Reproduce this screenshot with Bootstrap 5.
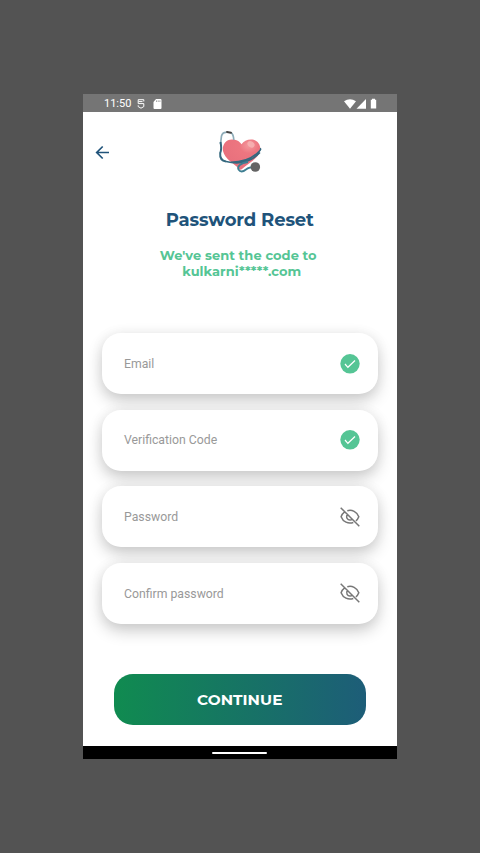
<!DOCTYPE html>
<html lang="en">
<head>
<meta charset="utf-8">
<meta name="viewport" content="width=device-width, initial-scale=1">
<title>Password Reset</title>
<link href="https://cdn.jsdelivr.net/npm/bootstrap@5.3.0/dist/css/bootstrap.min.css" rel="stylesheet">
<style>
body{background:#535353;height:853px;padding-top:94px;overflow:hidden}
svg{display:block;flex:none}
.phone{width:314.5px;height:664.5px;margin-left:82.5px;font-family:Roboto,sans-serif}
.status-strip{height:18px;background:#757575;padding:1px 20px 0 21.5px;font-size:11px;line-height:17px}
.shell-icon{margin-left:6px}
.battery{margin-left:3.500px}
.screen-head{height:98px;padding:0 13px}
.back-arrow{top:33px;margin-left:12.500px}
.logo{margin-top:16px}
.brand-font{font-family:Montserrat,Inter,"Open Sans",sans-serif;font-weight:700}
.screen-title{font-size:18px;line-height:22px;color:#20537a;margin:-1px 0 0;letter-spacing:-.13px}
.sent-note{font-size:13px;line-height:16px;color:#55c595;margin:16px 0 0;letter-spacing:.05px}
.first-line{padding-right:3px}
.second-line{padding-left:4px}
.fields{gap:15.600px;margin:54px 19px 0}
.field-box{height:61px;border-radius:19px;background:#fff;padding:0 18px 0 22.500px;font-size:12.250px;color:#999;box-shadow:0 7px 16px rgba(0,0,0,.2),0 0 14px rgba(0,0,0,.05)}
.field-box span{padding-top:1px}
.go{width:252.500px;height:51px;border-radius:19px;margin:50px auto 0;padding:2px 0 0;color:#fff;font-size:15.300px;letter-spacing:.05px;border:0;background:linear-gradient(90deg,#108b50,#1d5d78)}
.home-strip{height:12.500px;background:#000;padding-top:2px}
.home-line{width:55px;height:2px;border-radius:2px;background:#fff}
</style>
<script src="https://cdn.jsdelivr.net/npm/bootstrap@5.3.0/dist/js/bootstrap.bundle.min.js"></script>
</head>
<body>
<main class="phone bg-white d-flex flex-column">
  <div class="status-strip d-flex align-items-center text-white">
    <span>11:50</span>
    <svg class="shell-icon" width="8" height="10" viewBox="0 0 8 10" fill="none" stroke="#fff" stroke-width="1"><path d="M6.800 2.500V.7H1.200v3.900h5.600v3L4 9.200 1.200 7.600V6.300M1.500 2.600h4"/></svg>
    <svg class="ms-2" width="9" height="10" viewBox="0 0 9 10"><path d="M3 0h4.500q1 0 1 1v8q0 1-1 1h-6q-1 0-1-1V3z" fill="#fff"/><path d="M3.500 1.500v1.300M5.200 1.500v1.300M6.900 1.500v1.300" stroke="#757575" stroke-width=".8"/></svg>
    <svg class="ms-auto" width="12" height="10" viewBox="0 0 12 10"><path d="M0 2.300Q6-2 12 2.300L6 9.800z" fill="#fff"/></svg>
    <svg width="11" height="10" viewBox="0 0 11 10"><path d="M.5 9.700 10 0v9.700z" fill="#fff"/></svg>
    <svg class="battery" width="7" height="11" viewBox="0 0 7 11"><path d="M2 .7h3v1h1.200v8.800H.8V1.700H2z" fill="#fff"/></svg>
  </div>
  <div class="screen-head position-relative d-flex justify-content-center">
    <svg class="back-arrow position-absolute start-0" width="15" height="15" viewBox="0 0 15 15" fill="none" stroke="#20537a" stroke-width="1.700"><path d="M14 7.500H2M7.700 1.500l-6 6 6 6"/></svg>
    <svg class="logo" width="46" height="48" viewBox="217 128 46 48" fill="none">
      <defs><radialGradient id="heart" cx=".7" cy=".2" r=".85"><stop stop-color="#f49a9e"/><stop offset=".3" stop-color="#ed7680"/><stop offset="1" stop-color="#e76f7c"/></radialGradient></defs>
      <path d="M241.500 144.300C239 140.500 235.500 139.500 232 139.500C225 139.500 222 146 223 151C224.500 159 235 164 239 169Q240.500 170.500 242 169C248 163 258 159 260 151C261.500 144.500 257 139.500 251 139.500C247 139.500 243.500 141 241.500 144.300Z" fill="url(#heart)"/>
      <ellipse cx="251" cy="144.300" rx="3.800" ry="2.900" transform="rotate(35 251 144.300)" fill="#f7b4b4" opacity=".85"/>
      <path d="M231 132.700Q233.500 134 233.800 140M226.500 132.300Q222.500 132 221.500 136L220.500 144" stroke="#8eacb8" stroke-width="1.700"/>
      <path d="M220.500 142Q222 149 220.200 153Q219.500 160.500 226 161.500" stroke="#35687e" stroke-width="2"/>
      <path d="M227 131.900l4 .8" stroke="#444" stroke-width="2" stroke-linecap="round"/>
      <path d="M231 162.300C244 162 254 157 259.500 151Q261.500 149 260 148.500M226 161.500C240 165 252 161 260 152.500" stroke="#34687f" stroke-width="1.500"/>
      <path d="M248 162C240 163 237 167 238.500 169.500Q241 173.500 246 169.500Q249 167 255 167" stroke="#3f7f92" stroke-width="1.800"/>
      <circle cx="255.300" cy="167" r="4.800" fill="#646464"/>
    </svg>
  </div>
  <h1 class="brand-font screen-title text-center">Password Reset</h1>
  <p class="brand-font sent-note text-center"><span class="first-line">We've sent the code to</span><br><span class="second-line">kulkarni*****.com</span></p>
  <div class="fields d-flex flex-column">
    <div class="field-box d-flex align-items-center justify-content-between"><span>Email</span><svg width="20" height="20" viewBox="0 0 20 20"><circle cx="10" cy="9.800" r="9.700" fill="#55c595"/><path d="M5 10l2.900 3.300L15 6.500" fill="none" stroke="#fff" stroke-width="1.200"/></svg></div>
    <div class="field-box d-flex align-items-center justify-content-between"><span>Verification Code</span><svg width="20" height="20" viewBox="0 0 20 20"><circle cx="10" cy="9.800" r="9.700" fill="#55c595"/><path d="M5 10l2.900 3.300L15 6.500" fill="none" stroke="#fff" stroke-width="1.200"/></svg></div>
    <div class="field-box d-flex align-items-center justify-content-between"><span>Password</span><svg width="20" height="20" viewBox="0 0 20 20" fill="none" stroke="#777" stroke-width="1.500"><path d="M.7.700l18.600 18.600M7.300 3.800C12 2.300 17 5 18.800 9.700c-.7 1.800-1.600 3.100-2.900 4.100M4.400 5.200C2.900 6.300 1.800 7.800 1.100 9.700c2 5.200 7 7.500 12.200 5.800M7.400 7.500c-1.800 2.700.1 5.600 2.700 5.500 1 0 1.700-.3 2.300-.8"/></svg></div>
    <div class="field-box d-flex align-items-center justify-content-between"><span>Confirm password</span><svg width="20" height="20" viewBox="0 0 20 20" fill="none" stroke="#777" stroke-width="1.500"><path d="M.7.700l18.600 18.600M7.300 3.800C12 2.300 17 5 18.800 9.700c-.7 1.800-1.600 3.100-2.900 4.100M4.400 5.200C2.900 6.300 1.800 7.800 1.100 9.700c2 5.200 7 7.500 12.200 5.800M7.400 7.500c-1.800 2.700.1 5.600 2.700 5.500 1 0 1.700-.3 2.300-.8"/></svg></div>
  </div>
  <button type="button" class="go brand-font d-block flex-shrink-0">CONTINUE</button>
  <div class="home-strip mt-auto d-flex align-items-center justify-content-center"><div class="home-line"></div></div>
</main>
</body>
</html>
